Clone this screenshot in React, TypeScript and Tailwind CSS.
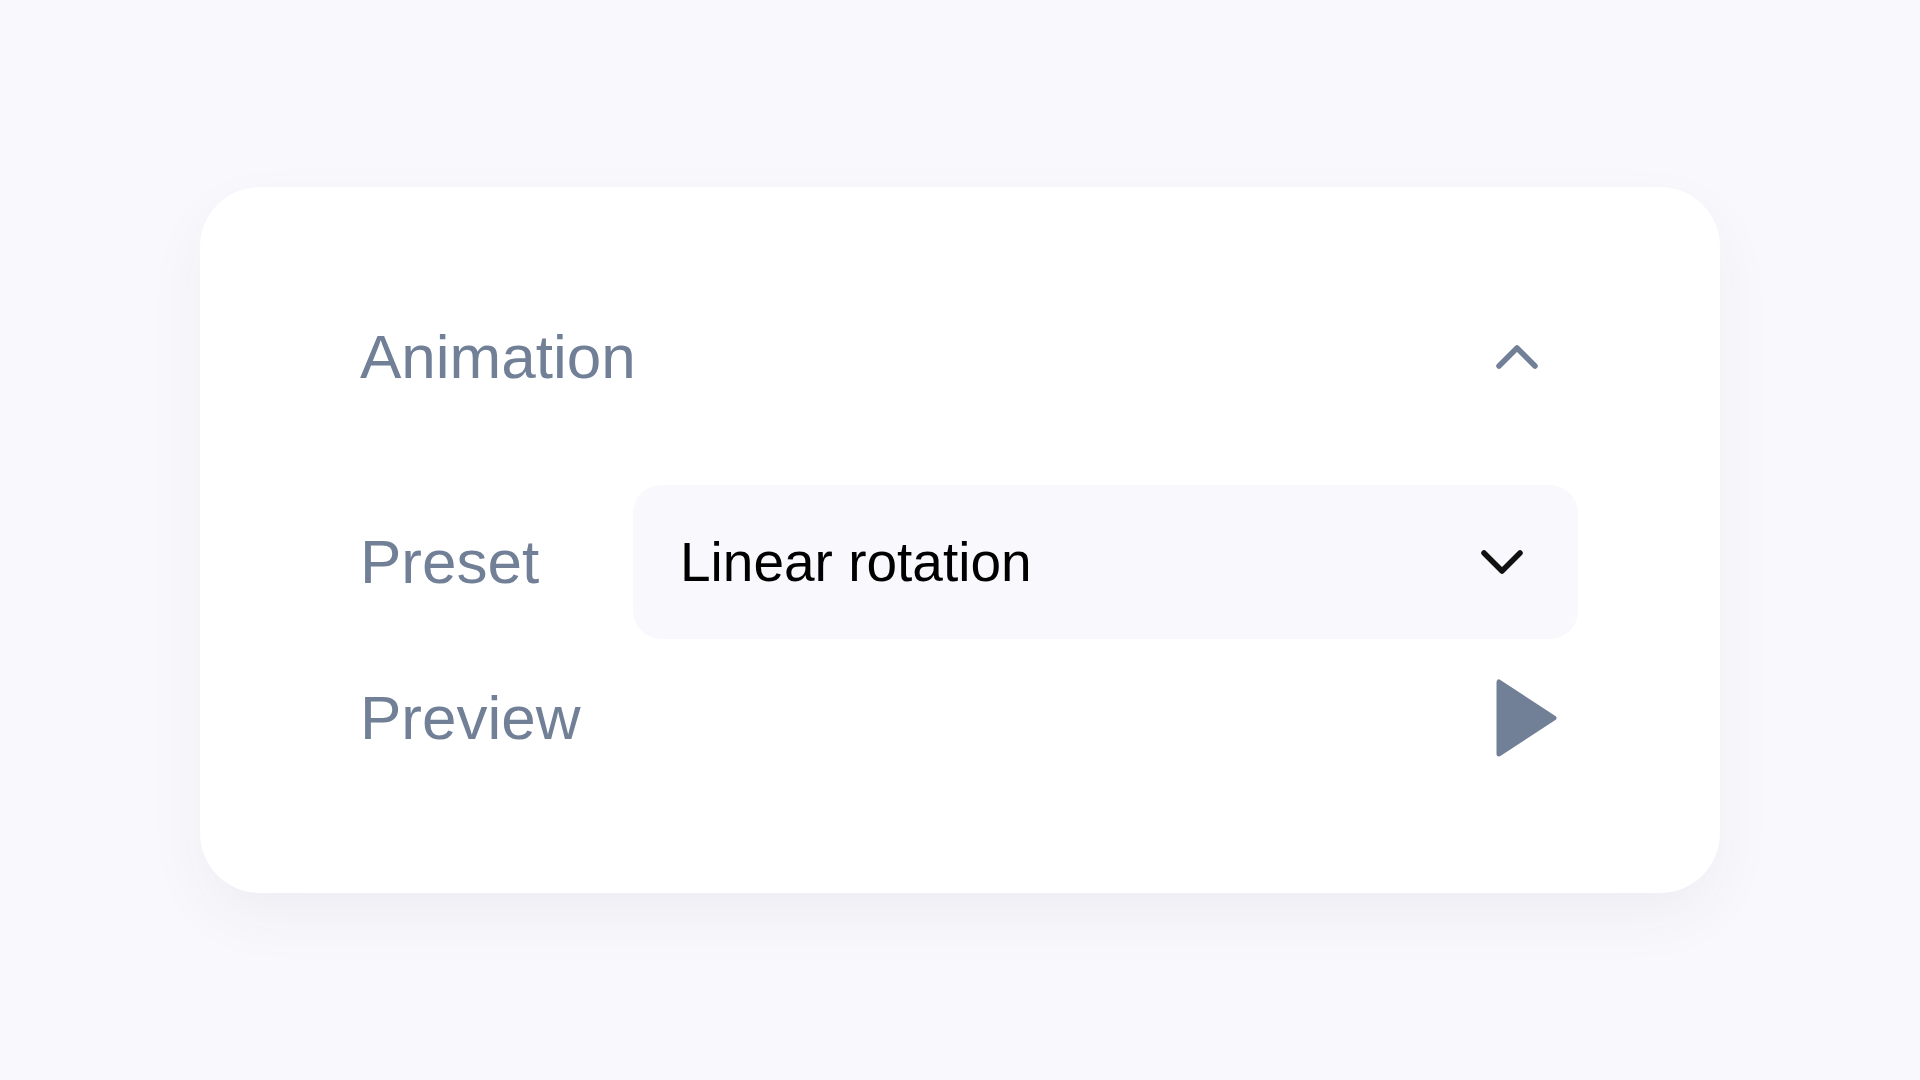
import React from "react";

const font = { fontFamily: '"Liberation Sans", Arial, Helvetica, sans-serif' };

function ChevronUp() {
  return (
    <svg width="42" height="24" viewBox="0 0 42 24" fill="none" className="shrink-0">
      <polyline points="3,21 21,3 39,21" stroke="#718096" strokeWidth="5.5" strokeLinecap="round" strokeLinejoin="round" />
    </svg>
  );
}

function ChevronDown() {
  return (
    <svg width="42" height="24" viewBox="0 0 42 24" fill="none" className="shrink-0">
      <polyline points="3,3 21,21 39,3" stroke="#111111" strokeWidth="5.5" strokeLinecap="round" strokeLinejoin="round" />
    </svg>
  );
}

function PlayIcon() {
  return (
    <svg width="61" height="78" viewBox="0 0 61 78" className="shrink-0">
      <path d="M3 3 L3 75 L58 39 Z" fill="#718096" stroke="#718096" strokeWidth="5" strokeLinejoin="round" />
    </svg>
  );
}

// Collapsible "Animation" settings card: preset picker + preview trigger.
export default function App() {
  return (
    <div className="flex min-h-screen items-center justify-center bg-[#f9f9fd]" style={font}>
      <section className="flex h-[706px] w-[1520px] flex-col rounded-[60px] bg-white pl-[160px] pr-[142px] pt-[122px] shadow-[0_24px_60px_rgba(20,20,60,0.05)]">
        <header className="flex h-[96px] items-center justify-between">
          <h2 className="text-[62px] leading-none text-[#718096]">Animation</h2>
          <span className="mr-[40px] flex">
            <ChevronUp />
          </span>
        </header>

        <div className="mt-[80px] flex h-[154px] items-center">
          <span className="w-[273px] shrink-0 text-[62px] leading-none text-[#718096]">Preset</span>
          <button className="flex h-full flex-1 items-center justify-between rounded-[28px] bg-[#f9f9fd] pl-[47px] pr-[55px] text-left">
            <span className="text-[55px] leading-none text-black">Linear rotation</span>
            <ChevronDown />
          </button>
        </div>

        <div className="mt-[39px] flex h-[80px] items-center justify-between">
          <span className="text-[62px] leading-none text-[#718096]">Preview</span>
          <span className="mr-[21px] flex">
            <PlayIcon />
          </span>
        </div>
      </section>
    </div>
  );
}
